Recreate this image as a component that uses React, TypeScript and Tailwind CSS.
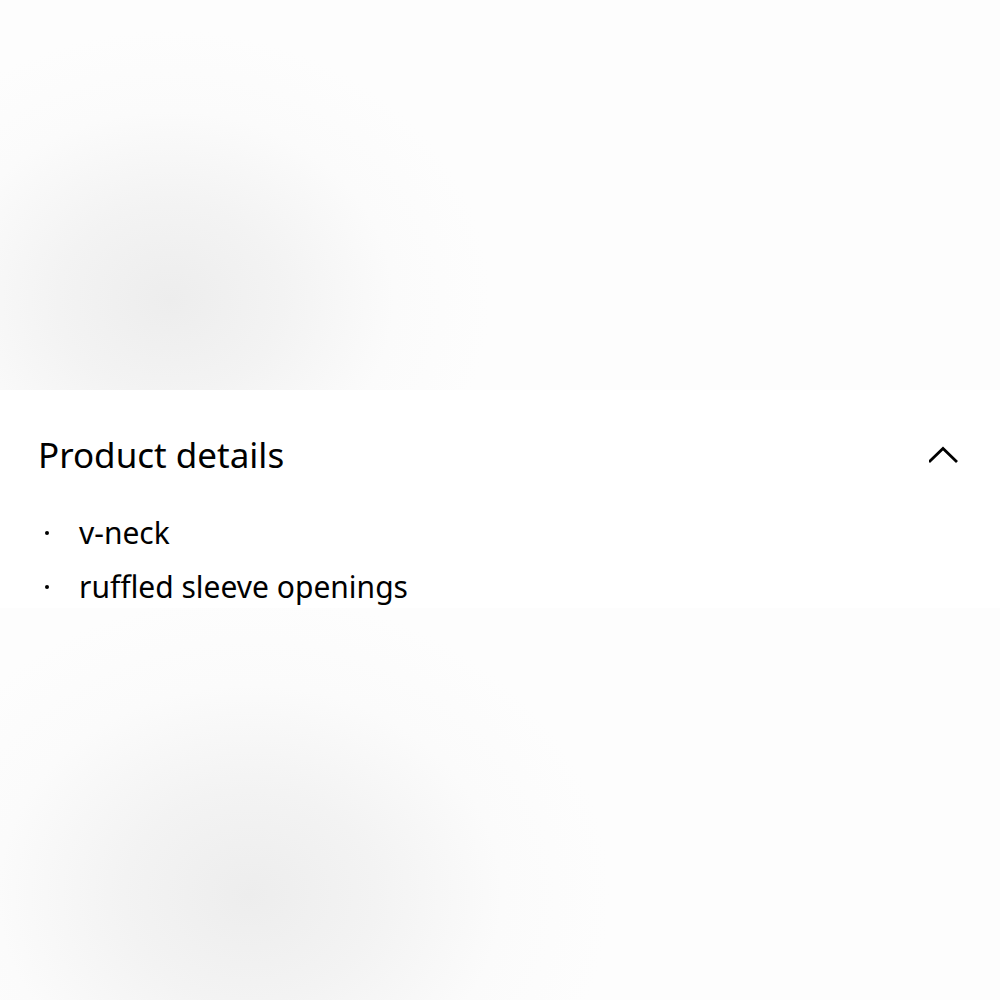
import React from 'react';

const details = ['v-neck', 'ruffled sleeve openings'];

const ChevronUp: React.FC = () => (
  <svg width="30" height="18" viewBox="0 0 30 18" fill="none" className="text-black">
    <polyline points="1,15 14,2.5 27,15" stroke="currentColor" strokeWidth="2.8" strokeLinecap="square" strokeLinejoin="miter" />
  </svg>
);

const App: React.FC = () => {
  return (
    <div className="flex h-[1000px] w-full flex-col bg-white font-['Noto_Sans','Open_Sans',sans-serif] text-black">
      {/* image placeholders, still loading */}
      <div className="h-[390px] w-full bg-[radial-gradient(ellipse_320px_270px_at_170px_300px,#ededed_0%,#f3f3f3_35%,#fbfbfb_70%,#fdfdfd_100%),radial-gradient(ellipse_220px_260px_at_1010px_300px,#f8f8f8_0%,#fdfdfd_100%)] bg-no-repeat"></div>

      {/* accordion */}
      <section className="h-[218px] bg-white px-[38px] pt-[45px]">
        <div className="flex items-center justify-between">
          <h2 className="text-[35px] leading-[40px]">Product details</h2>
          <div className="mr-[3px]">
            <ChevronUp />
          </div>
        </div>
        <ul className="mt-[31px]">
          {details.map((item) => (
            <li key={item} className="flex items-center text-[30px] leading-[54px]">
              <span className="flex w-[41px] items-center">
                <span className="ml-[7px] h-[4px] w-[4px] rounded-full bg-black"></span>
              </span>
              <span>{item}</span>
            </li>
          ))}
        </ul>
      </section>

      <div className="w-full flex-1 bg-[radial-gradient(ellipse_360px_300px_at_250px_287px,#ededed_0%,#f3f3f3_35%,#fbfbfb_70%,#fdfdfd_100%)] bg-no-repeat"></div>
    </div>
  );
};

export default App;
